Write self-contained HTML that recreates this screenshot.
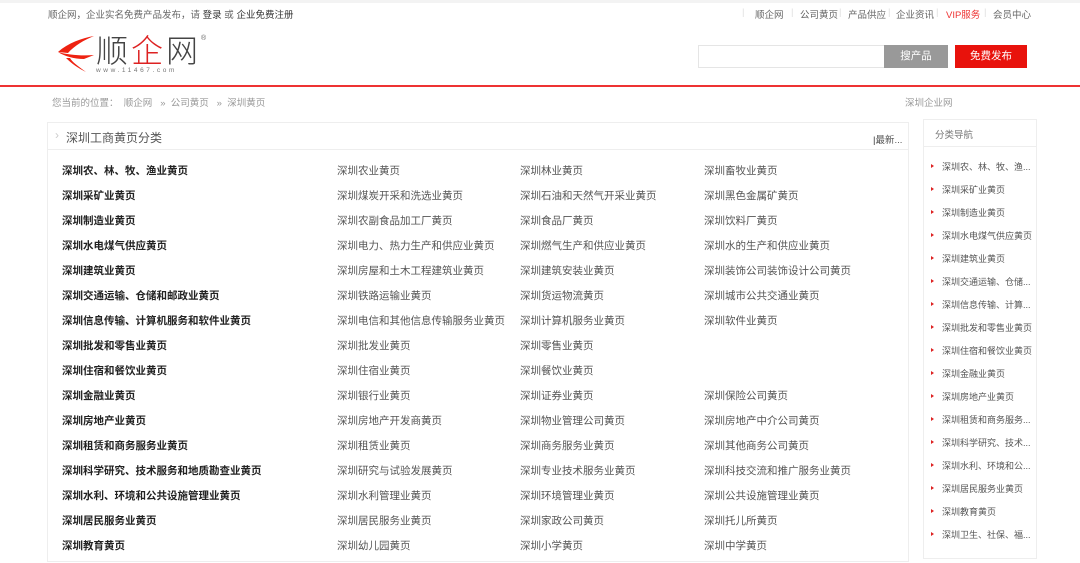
<!DOCTYPE html>
<html><head><meta charset="utf-8"><style>
*{margin:0;padding:0;box-sizing:border-box}
body{width:1080px;height:544px;overflow:hidden;background:#fff;font-family:"Liberation Sans","Noto Sans CJK SC",sans-serif;font-size:10px;color:#666;position:relative}
.a{position:absolute;white-space:nowrap}
.n{position:absolute;top:7px;font-size:9.5px;color:#666;white-space:nowrap}
.s{position:absolute;top:7px;font-size:9.5px;color:#ddd}
.row{position:absolute;left:0;width:860px;height:25px}
.row span{position:absolute;top:0;font-size:10.5px;color:#555}
.row span.b{color:#222;font-weight:bold}
.side{position:absolute;left:923px;top:119px;width:114px;height:440px;border:1px solid #eee;overflow:hidden}
.side li{list-style:none;position:absolute;left:8px;font-size:9px;color:#555;white-space:nowrap}
.side li:before{content:"";position:absolute;left:-1px;top:4px;border-left:3px solid #d22;border-top:2px solid transparent;border-bottom:2px solid transparent}
.side li span{margin-left:10px}
</style></head><body>
<div class="a" style="left:0;top:0;width:1080px;height:3px;background:#f3f3f3"></div>
<div class="a" style="left:48px;top:7px;font-size:9.5px;color:#666">顺企网，企业实名免费产品发布，请 <b style="color:#333;font-weight:normal">登录</b> 或 <span style="color:#333">企业免费注册</span></div>
<span class="s" style="left:742px">|</span><span class="n" style="left:755px">顺企网</span>
<span class="s" style="left:791px">|</span><span class="n" style="left:800px">公司黄页</span>
<span class="s" style="left:839px">|</span><span class="n" style="left:848px">产品供应</span>
<span class="s" style="left:888px">|</span><span class="n" style="left:896px">企业资讯</span>
<span class="s" style="left:936px">|</span><span class="n" style="left:946px;color:#e33">VIP服务</span>
<span class="s" style="left:984px">|</span><span class="n" style="left:993px">会员中心</span>
<svg class="a" style="left:54px;top:34px" width="44" height="40" viewBox="0 0 44 40"><path d="M40 2 C28 4 14 9 4 18 L14 19 C20 12 30 6 40 2Z" fill="#e21"/><path d="M4 18 C14 21 28 22 40 21 L30 25 C20 25 10 22 4 18Z" fill="#e21"/><path d="M12 24 C18 30 24 34 32 38 C24 32 18 28 16 24Z" fill="#e21"/></svg>
<div class="a" style="left:96px;top:30px;font-size:32px;color:#444;letter-spacing:3px;font-family:'Noto Sans CJK SC',sans-serif;font-weight:300;line-height:38px">顺<span style="color:#d22">企</span>网</div>
<div class="a" style="left:201px;top:35px;font-size:7px;color:#666">®</div>
<div class="a" style="left:96px;top:67px;font-size:6.5px;color:#777;letter-spacing:2.6px;line-height:8px;background:#fff">www.11467.com</div>
<div class="a" style="left:698px;top:45px;width:187px;height:23px;border:1px solid #e5e5e5"></div>
<div class="a" style="left:884px;top:45px;width:64px;height:23px;background:#999;color:#fff;font-size:10.5px;text-align:center;line-height:23px">搜产品</div>
<div class="a" style="left:955px;top:45px;width:72px;height:23px;background:#e8120c;color:#fff;font-size:10.5px;text-align:center;line-height:23px">免费发布</div>
<div class="a" style="left:0;top:85px;width:1080px;height:2px;background:#e33"></div>
<div class="a" style="left:52px;top:95px;font-size:9.5px;color:#999">您当前的位置：&nbsp;&nbsp;顺企网&nbsp;&nbsp;&nbsp;»&nbsp;&nbsp;公司黄页&nbsp;&nbsp;&nbsp;»&nbsp;&nbsp;深圳黄页</div>
<div class="a" style="left:905px;top:95px;font-size:9.5px;color:#999">深圳企业网</div>
<div class="a" style="left:47px;top:122px;width:862px;height:440px;border:1px solid #eee"></div>
<div class="a" style="left:47px;top:149px;width:862px;height:1px;background:#eee"></div>
<div class="a" style="left:55px;top:128px;font-size:12px;color:#ccc">›</div>
<div class="a" style="left:66px;top:129px;font-size:12px;color:#555">深圳工商黄页分类</div>
<div class="a" style="left:873px;top:132px;font-size:9.5px;color:#555"><span style="color:#333">|</span>最新...</div>
<div class="side">
<div style="height:27px;border-bottom:1px solid #eee;font-size:9.5px;color:#777;padding:7px 0 0 11px">分类导航</div>
<ul>
<li style="top:40px"><span>深圳农、林、牧、渔...</span></li>
<li style="top:63px"><span>深圳采矿业黄页</span></li>
<li style="top:86px"><span>深圳制造业黄页</span></li>
<li style="top:109px"><span>深圳水电煤气供应黄页</span></li>
<li style="top:132px"><span>深圳建筑业黄页</span></li>
<li style="top:155px"><span>深圳交通运输、仓储...</span></li>
<li style="top:178px"><span>深圳信息传输、计算...</span></li>
<li style="top:201px"><span>深圳批发和零售业黄页</span></li>
<li style="top:224px"><span>深圳住宿和餐饮业黄页</span></li>
<li style="top:247px"><span>深圳金融业黄页</span></li>
<li style="top:270px"><span>深圳房地产业黄页</span></li>
<li style="top:293px"><span>深圳租赁和商务服务...</span></li>
<li style="top:316px"><span>深圳科学研究、技术...</span></li>
<li style="top:339px"><span>深圳水利、环境和公...</span></li>
<li style="top:362px"><span>深圳居民服务业黄页</span></li>
<li style="top:385px"><span>深圳教育黄页</span></li>
<li style="top:408px"><span>深圳卫生、社保、福...</span></li>
</ul></div>
<div style="position:absolute;left:0;top:163px">
<div class="row" style="top:0"><span class="b" style="left:62px">深圳农、林、牧、渔业黄页</span><span style="left:337px">深圳农业黄页</span><span style="left:520px">深圳林业黄页</span><span style="left:704px">深圳畜牧业黄页</span></div>
<div class="row" style="top:25px"><span class="b" style="left:62px">深圳采矿业黄页</span><span style="left:337px">深圳煤炭开采和洗选业黄页</span><span style="left:520px">深圳石油和天然气开采业黄页</span><span style="left:704px">深圳黑色金属矿黄页</span></div>
<div class="row" style="top:50px"><span class="b" style="left:62px">深圳制造业黄页</span><span style="left:337px">深圳农副食品加工厂黄页</span><span style="left:520px">深圳食品厂黄页</span><span style="left:704px">深圳饮料厂黄页</span></div>
<div class="row" style="top:75px"><span class="b" style="left:62px">深圳水电煤气供应黄页</span><span style="left:337px">深圳电力、热力生产和供应业黄页</span><span style="left:520px">深圳燃气生产和供应业黄页</span><span style="left:704px">深圳水的生产和供应业黄页</span></div>
<div class="row" style="top:100px"><span class="b" style="left:62px">深圳建筑业黄页</span><span style="left:337px">深圳房屋和土木工程建筑业黄页</span><span style="left:520px">深圳建筑安装业黄页</span><span style="left:704px">深圳装饰公司装饰设计公司黄页</span></div>
<div class="row" style="top:125px"><span class="b" style="left:62px">深圳交通运输、仓储和邮政业黄页</span><span style="left:337px">深圳铁路运输业黄页</span><span style="left:520px">深圳货运物流黄页</span><span style="left:704px">深圳城市公共交通业黄页</span></div>
<div class="row" style="top:150px"><span class="b" style="left:62px">深圳信息传输、计算机服务和软件业黄页</span><span style="left:337px">深圳电信和其他信息传输服务业黄页</span><span style="left:520px">深圳计算机服务业黄页</span><span style="left:704px">深圳软件业黄页</span></div>
<div class="row" style="top:175px"><span class="b" style="left:62px">深圳批发和零售业黄页</span><span style="left:337px">深圳批发业黄页</span><span style="left:520px">深圳零售业黄页</span></div>
<div class="row" style="top:200px"><span class="b" style="left:62px">深圳住宿和餐饮业黄页</span><span style="left:337px">深圳住宿业黄页</span><span style="left:520px">深圳餐饮业黄页</span></div>
<div class="row" style="top:225px"><span class="b" style="left:62px">深圳金融业黄页</span><span style="left:337px">深圳银行业黄页</span><span style="left:520px">深圳证券业黄页</span><span style="left:704px">深圳保险公司黄页</span></div>
<div class="row" style="top:250px"><span class="b" style="left:62px">深圳房地产业黄页</span><span style="left:337px">深圳房地产开发商黄页</span><span style="left:520px">深圳物业管理公司黄页</span><span style="left:704px">深圳房地产中介公司黄页</span></div>
<div class="row" style="top:275px"><span class="b" style="left:62px">深圳租赁和商务服务业黄页</span><span style="left:337px">深圳租赁业黄页</span><span style="left:520px">深圳商务服务业黄页</span><span style="left:704px">深圳其他商务公司黄页</span></div>
<div class="row" style="top:300px"><span class="b" style="left:62px">深圳科学研究、技术服务和地质勘查业黄页</span><span style="left:337px">深圳研究与试验发展黄页</span><span style="left:520px">深圳专业技术服务业黄页</span><span style="left:704px">深圳科技交流和推广服务业黄页</span></div>
<div class="row" style="top:325px"><span class="b" style="left:62px">深圳水利、环境和公共设施管理业黄页</span><span style="left:337px">深圳水利管理业黄页</span><span style="left:520px">深圳环境管理业黄页</span><span style="left:704px">深圳公共设施管理业黄页</span></div>
<div class="row" style="top:350px"><span class="b" style="left:62px">深圳居民服务业黄页</span><span style="left:337px">深圳居民服务业黄页</span><span style="left:520px">深圳家政公司黄页</span><span style="left:704px">深圳托儿所黄页</span></div>
<div class="row" style="top:375px"><span class="b" style="left:62px">深圳教育黄页</span><span style="left:337px">深圳幼儿园黄页</span><span style="left:520px">深圳小学黄页</span><span style="left:704px">深圳中学黄页</span></div>
</div>
</body></html>
